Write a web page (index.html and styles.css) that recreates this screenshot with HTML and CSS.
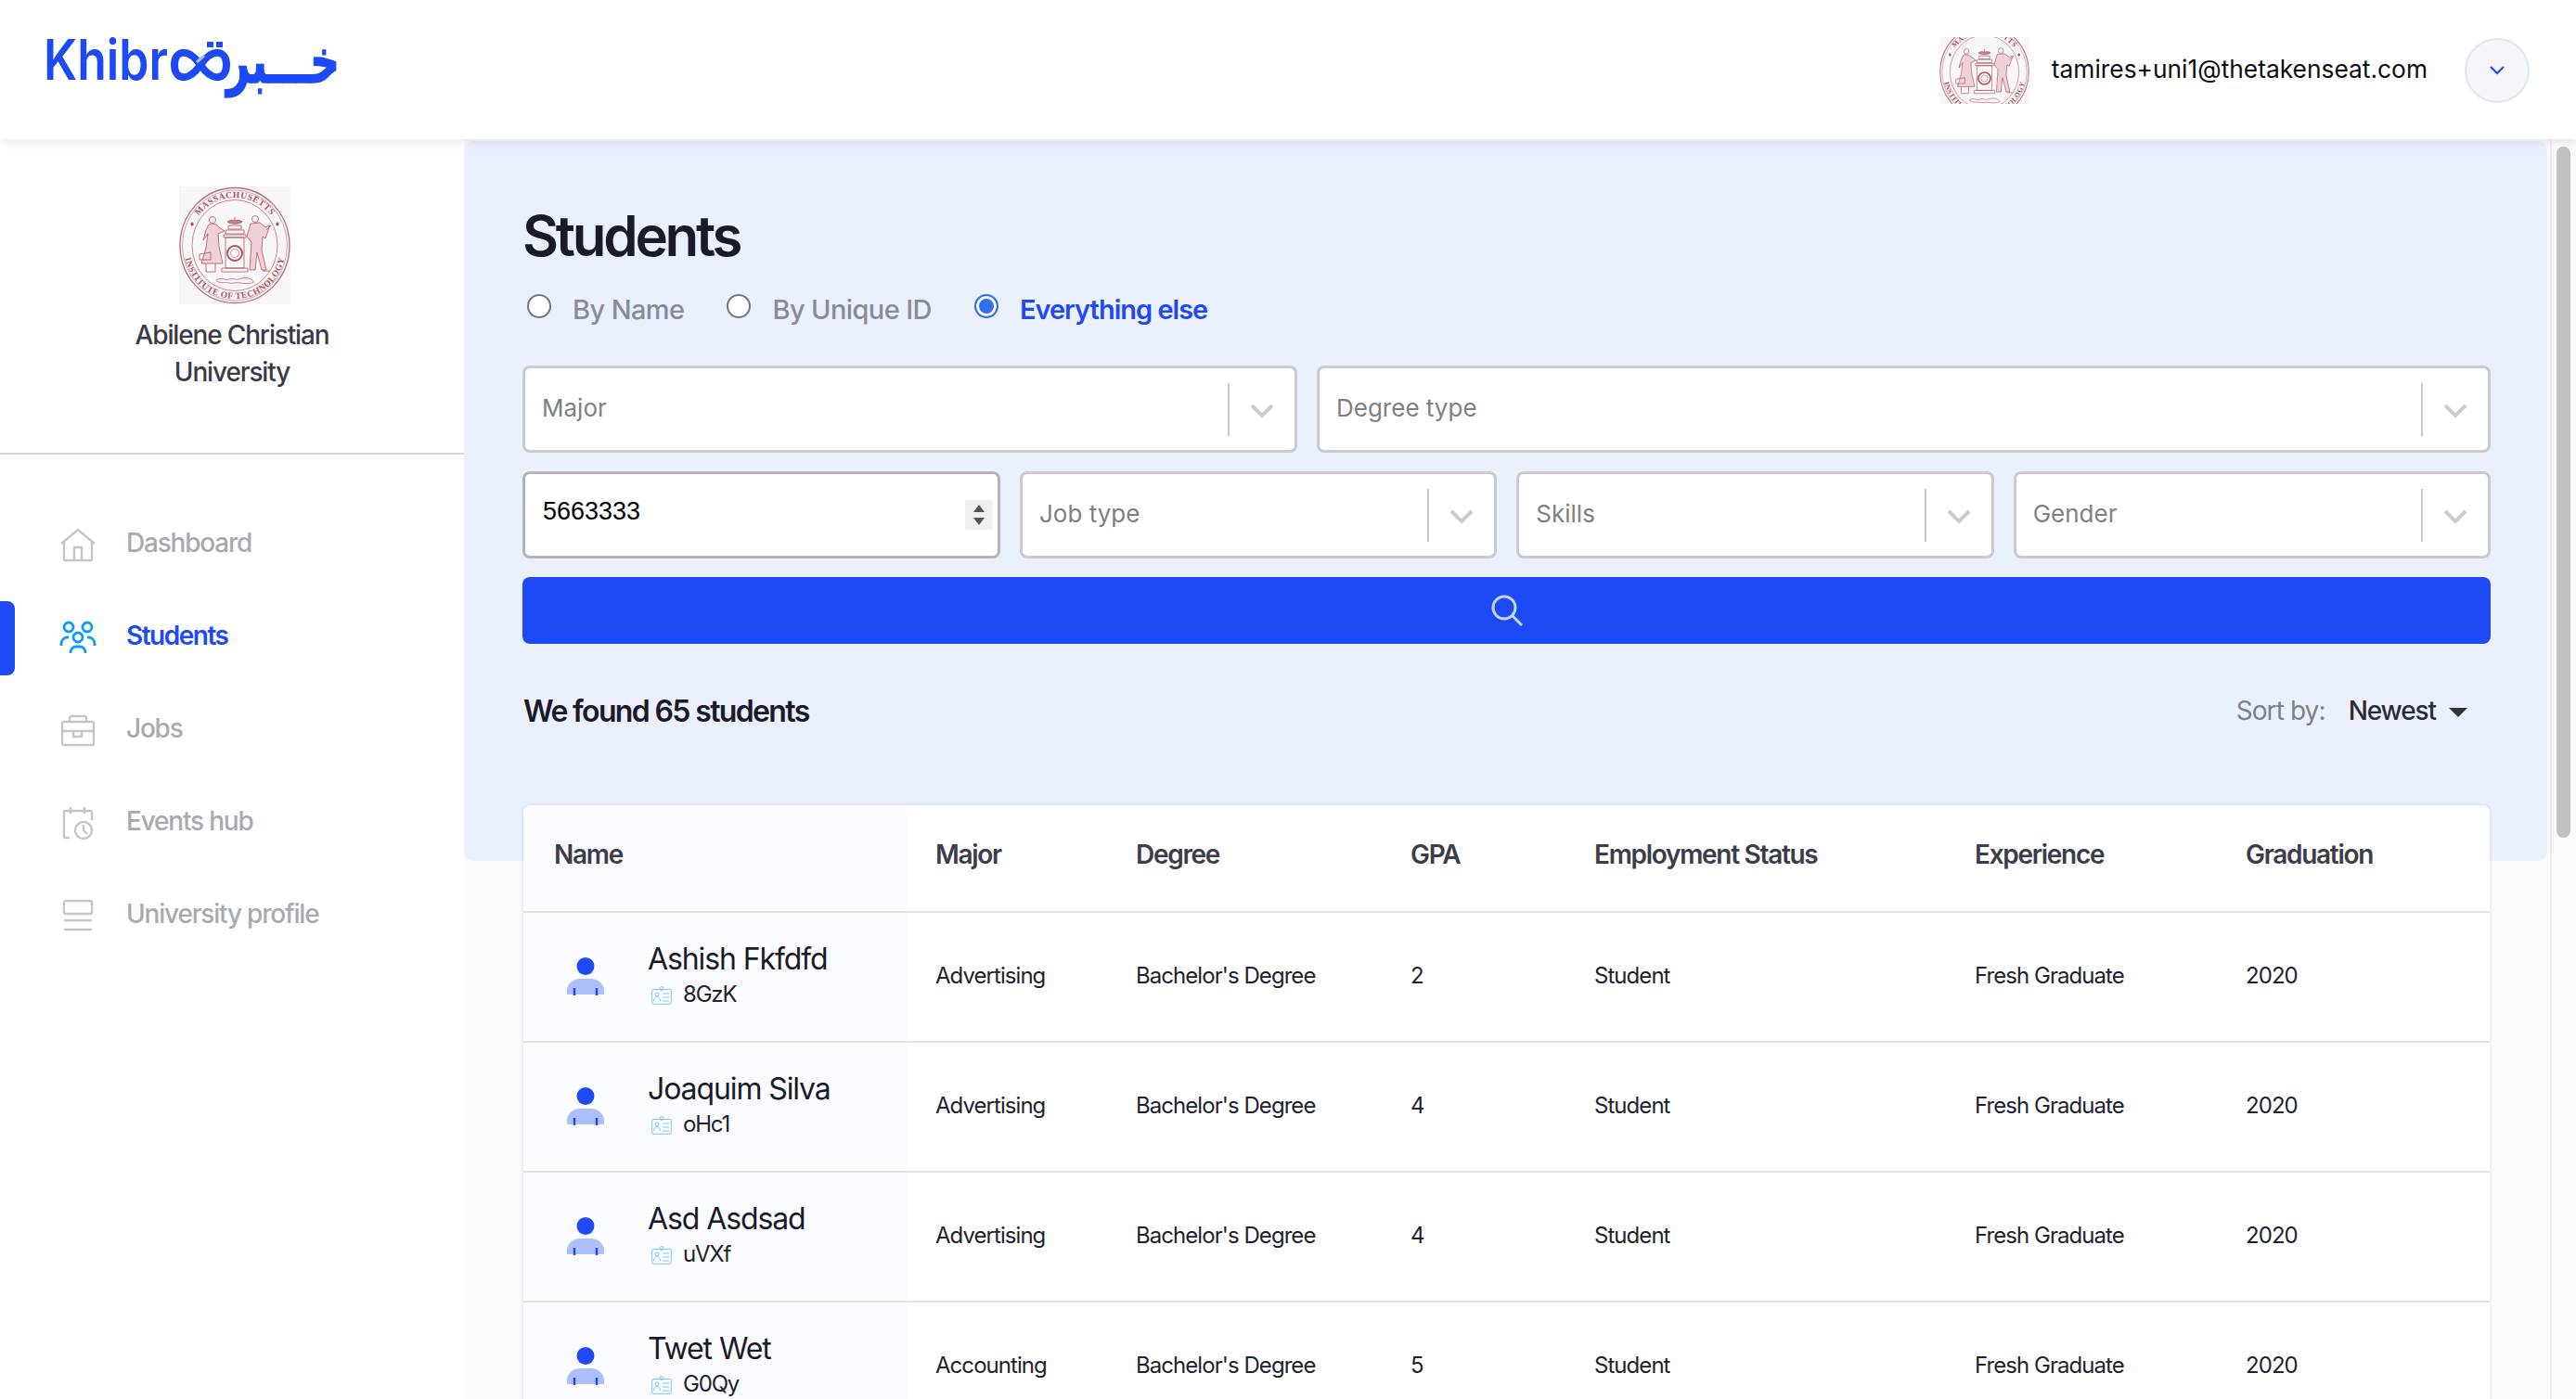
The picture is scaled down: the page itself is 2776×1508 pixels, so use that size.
FILE: index.html
```html
<!DOCTYPE html>
<html lang="en">
<head>
<meta charset="utf-8">
<title>Students</title>
<link rel="stylesheet" href="styles.css">
</head>
<body>
<svg class="defs" width="0" height="0" aria-hidden="true">
  <defs>
    <path id="sealTop" d="M10 63.500 A50 51.500 0 0 1 110 63.500"/>
    <path id="sealBottom" d="M3 50 C3 100 30 121 60 121 C90 121 117 100 117 50"/>
    <g id="seal">
      <rect width="120" height="127" fill="#f7f7f7"/>
      <g fill="none" stroke="#c06a78">
        <ellipse cx="60" cy="63.500" rx="59" ry="62" stroke-width="1.300"/>
        <ellipse cx="60" cy="63.500" rx="56.500" ry="59.500" stroke-width=".6"/>
        <ellipse cx="60" cy="63.500" rx="46" ry="49" stroke-width=".8"/>
      </g>
      <g class="seal-text">
        <text><textPath href="#sealTop" startOffset="50%" text-anchor="middle">MASSACHUSETTS</textPath></text>
        <text><textPath href="#sealBottom" startOffset="50%" text-anchor="middle">INSTITUTE OF TECHNOLOGY</textPath></text>
      </g>
      <g fill="#b5505f">
        <path d="M14 38l2 2.500-2 2.500-2-2.500zM106 38l2 2.500-2 2.500-2-2.500z"/>
      </g>
      <g fill="none" stroke="#b5505f" stroke-width=".8">
        <path d="M52 38c3-2 5-2 8-1 3-1 6-1 8 1-3 3-13 3-16 0z" fill="#c9808c"/>
        <path d="M60 33v4M53 42h14v4H53zM50 47h20v4H50z"/>
        <path d="M48 52h24v3H48zM50 55h20v33H50zM46 88h28v4H46z"/>
        <circle cx="60" cy="72" r="8" stroke-width="2"/>
        <circle cx="60" cy="72" r="4.500" stroke-width=".6"/>
        <circle cx="36" cy="36" r="3.500"/>
        <path d="M32 41c4-2 9 0 11 3l6 4-7 3 1 14 4 18H24l5-17 2-15-5 7 3-11z" fill="#eed1d6"/>
        <path d="M29 83v9h10v-9M22 73l12-2v8H22z"/>
        <circle cx="82" cy="35" r="3.500"/>
        <path d="M77 40l10-1 6 5 5-2-5 14-3-2-1 15 5 21h-5l-5-19-2 19h-6l2-30-5-6z" fill="#eed1d6"/>
        <path d="M94 47l5-5M90 91h8"/>
        <path d="M40 101c6-4 10 1 14-1s7 1 10 0 10-3 15 1-7 4-13 3-8 1-12 0-12 1-14-3z" stroke-width=".7"/>
      </g>
    </g>
  </defs>
</svg>

<header class="topbar">
  <svg class="logo" viewBox="0 0 316 66" role="img" aria-label="Khibra">
    <text class="logo-latin" x="-3" y="44" textLength="134" lengthAdjust="spacingAndGlyphs">Khibr</text>
    <path class="logo-stroke" d="M166 28 C152 8 138 13 138 28 C138 43 152 48 166 28 C180 8 194 13 194 28 C194 43 180 48 166 28 Z"/>
    <path class="logo-link" d="M162 25l8-7"/>
    <path class="logo-dots" d="M173 3h7v6h-7zM183 3h7v6h-7z"/>
    <text class="logo-arabic" x="316" y="47" direction="rtl" textLength="122" lengthAdjust="spacingAndGlyphs">خـــبر</text>
  </svg>
  <div class="account">
    <svg class="account-seal" viewBox="0 17 120 89" preserveAspectRatio="none"><use href="#seal"/></svg>
    <span class="account-mail">tamires+uni1@thetakenseat.com</span>
    <button class="account-toggle" type="button" aria-label="Open menu">
      <svg width="18" height="12" viewBox="0 0 18 12"><path d="M2 2l7 7 7-7" fill="none" stroke="#1e4af5" stroke-width="2.200"/></svg>
    </button>
  </div>
</header>

<div class="shell">
  <aside class="sidebar">
    <div class="org">
      <svg class="org-seal" viewBox="0 0 120 127"><use href="#seal"/></svg>
      <p class="org-name">Abilene Christian University</p>
    </div>
    <nav class="nav">
      <a class="nav-item">
        <svg class="nav-icon" viewBox="0 0 40 40"><path d="M2 18L20 3l18 15M5 16v19a1 1 0 0 0 1 1h28a1 1 0 0 0 1-1V16M16 36V22h8v14"/></svg>
        Dashboard
      </a>
      <a class="nav-item active">
        <svg class="nav-icon" viewBox="0 0 40 40"><circle cx="10" cy="8" r="5"/><circle cx="30" cy="8" r="5"/><circle cx="20" cy="19" r="5"/><path d="M2 28v-2a7 7 0 0 1 6-7h2M38 28v-2a7 7 0 0 0-6-7h-2M12 36v-1a6 6 0 0 1 6-6h4a6 6 0 0 1 6 6v1"/></svg>
        Students
      </a>
      <a class="nav-item">
        <svg class="nav-icon" viewBox="0 0 40 40"><rect x="3" y="10" width="34" height="25" rx="2"/><path d="M11 10V6a2 2 0 0 1 2-2h14a2 2 0 0 1 2 2v4M3 20h34M15 20v6h9v-6"/></svg>
        Jobs
      </a>
      <a class="nav-item">
        <svg class="nav-icon" viewBox="0 0 40 40"><path d="M11 6H6a1 1 0 0 0-1 1v27a1 1 0 0 0 1 1h5M11 6h18M29 6h5a1 1 0 0 1 1 1v9M12 2v7M27 2v7"/><circle cx="26" cy="27" r="9"/><path d="M26 21v6l4 4"/></svg>
        Events hub
      </a>
      <a class="nav-item">
        <svg class="nav-icon" viewBox="0 0 40 40"><rect x="5" y="3" width="30" height="14" rx="2"/><path d="M5 24h30M5 34h30"/></svg>
        University profile
      </a>
    </nav>
  </aside>

  <main class="content">
    <section class="search-panel">
      <h1 class="title">Students</h1>
      <div class="modes">
        <label class="mode"><span class="radio"></span>By Name</label>
        <label class="mode"><span class="radio"></span>By Unique ID</label>
        <label class="mode selected"><span class="radio"></span>Everything else</label>
      </div>
      <div class="filter-row">
        <div class="select wide-major"><span class="select-label">Major</span><span class="select-sep"></span><svg class="chev" viewBox="0 0 26 16"><path d="M2 2l11 11L24 2"/></svg></div>
        <div class="select wide-degree"><span class="select-label">Degree type</span><span class="select-sep"></span><svg class="chev" viewBox="0 0 26 16"><path d="M2 2l11 11L24 2"/></svg></div>
      </div>
      <div class="filter-row">
        <div class="number-box"><span class="number-value">5663333</span>
          <span class="spinner"><svg width="14" height="26" viewBox="0 0 14 26"><path d="M7 2l6 8H1zM7 24l-6-8h12z" fill="#555"/></svg></span>
        </div>
        <div class="select cell"><span class="select-label">Job type</span><span class="select-sep"></span><svg class="chev" viewBox="0 0 26 16"><path d="M2 2l11 11L24 2"/></svg></div>
        <div class="select cell"><span class="select-label">Skills</span><span class="select-sep"></span><svg class="chev" viewBox="0 0 26 16"><path d="M2 2l11 11L24 2"/></svg></div>
        <div class="select cell"><span class="select-label">Gender</span><span class="select-sep"></span><svg class="chev" viewBox="0 0 26 16"><path d="M2 2l11 11L24 2"/></svg></div>
      </div>
      <button class="search-btn" type="button" aria-label="Search">
        <svg width="36" height="36" viewBox="0 0 36 36"><circle cx="15" cy="15" r="12"/><path d="M24 24l10 10"/></svg>
      </button>
      <div class="result-bar">
        <strong class="result-count">We found 65 students</strong>
        <div class="sort"><span class="sort-label">Sort by:</span><span class="sort-value">Newest</span><span class="caret"></span></div>
      </div>
    </section>

    <div class="table-card">
      <table class="students">
        <colgroup>
          <col class="c-name"><col class="c-major"><col class="c-degree"><col class="c-gpa"><col class="c-status"><col class="c-exp"><col class="c-grad">
        </colgroup>
        <thead>
          <tr><th>Name</th><th>Major</th><th>Degree</th><th>GPA</th><th>Employment Status</th><th>Experience</th><th>Graduation</th></tr>
        </thead>
        <tbody>
          <tr>
            <td><div class="person"><svg class="avatar" viewBox="0 0 40 40"><use href="#avatarArt"/></svg><div><div class="person-name">Ashish Fkfdfd</div><div class="person-id"><svg class="id-icon" viewBox="0 0 22 20"><use href="#idArt"/></svg>8GzK</div></div></div></td>
            <td>Advertising</td><td>Bachelor's Degree</td><td>2</td><td>Student</td><td>Fresh Graduate</td><td>2020</td>
          </tr>
          <tr>
            <td><div class="person"><svg class="avatar" viewBox="0 0 40 40"><use href="#avatarArt"/></svg><div><div class="person-name">Joaquim Silva</div><div class="person-id"><svg class="id-icon" viewBox="0 0 22 20"><use href="#idArt"/></svg>oHc1</div></div></div></td>
            <td>Advertising</td><td>Bachelor's Degree</td><td>4</td><td>Student</td><td>Fresh Graduate</td><td>2020</td>
          </tr>
          <tr>
            <td><div class="person"><svg class="avatar" viewBox="0 0 40 40"><use href="#avatarArt"/></svg><div><div class="person-name">Asd Asdsad</div><div class="person-id"><svg class="id-icon" viewBox="0 0 22 20"><use href="#idArt"/></svg>uVXf</div></div></div></td>
            <td>Advertising</td><td>Bachelor's Degree</td><td>4</td><td>Student</td><td>Fresh Graduate</td><td>2020</td>
          </tr>
          <tr>
            <td><div class="person"><svg class="avatar" viewBox="0 0 40 40"><use href="#avatarArt"/></svg><div><div class="person-name">Twet Wet</div><div class="person-id"><svg class="id-icon" viewBox="0 0 22 20"><use href="#idArt"/></svg>G0Qy</div></div></div></td>
            <td>Accounting</td><td>Bachelor's Degree</td><td>5</td><td>Student</td><td>Fresh Graduate</td><td>2020</td>
          </tr>
        </tbody>
      </table>
    </div>
  </main>

  <div class="scrollbar"><span class="scroll-thumb"></span></div>
</div>

<svg class="defs" width="0" height="0" aria-hidden="true">
  <defs>
    <g id="avatarArt">
      <circle cx="20" cy="9.500" r="9.500" fill="#1e4af5"/>
      <path d="M0 40V34a14 14 0 0 1 14-11h12a14 14 0 0 1 14 11v6z" fill="#aec0fb"/>
      <path d="M8 33v8M32 33v8" stroke="#1e4af5" stroke-width="2.400"/>
    </g>
    <g id="idArt" fill="none" stroke="#7cc4ff" stroke-width="1">
      <rect x=".7" y="3.500" width="20.600" height="15.800" rx="1.500"/>
      <circle cx="11" cy="2.500" r="2"/>
      <circle cx="6" cy="9" r="2"/>
      <path d="M2.500 16c0-6 7-6 7 0M12 8h7M12 12h7M12 16h7"/>
    </g>
  </defs>
</svg>
</body>
</html>
```
FILE: styles.css
```css
* { box-sizing: border-box; }

html, body {
  margin: 0;
  height: 100%;
  overflow: hidden;
}

body {
  font-family: Inter, "Noto Sans", sans-serif;
  background: #fff;
  color: #1b1b2a;
  width: 2776px;
  height: 1508px;
}

.defs { position: absolute; }

/* top bar */
.topbar {
  position: relative;
  z-index: 2;
  height: 150px;
  display: flex;
  align-items: flex-start;
  justify-content: space-between;
  padding: 40px 50px 0 50px;
  background: #fff;
  box-shadow: 0 2px 10px rgba(30, 40, 80, .12);
}

.logo { width: 316px; height: 66px; margin-top: 2px; overflow: visible; }
.logo-latin { font: 600 60px Inter, sans-serif; fill: #1e4af5; }
.logo-arabic { font: 700 66px "DejaVu Sans", sans-serif; fill: #1e4af5; stroke: #1e4af5; stroke-width: 1.500px; }
.logo-stroke { fill: none; stroke: #1e4af5; stroke-width: 8; }
.logo-link { stroke: #a9bdfb; stroke-width: 3; }
.logo-dots { fill: #1e4af5; }

.account { display: flex; align-items: center; height: 72px; }
.account-seal { width: 97px; height: 72px; margin-right: 24px; }
.account-mail { font-size: 26.350px; color: #0c0c14; margin: -4px 40px 0 0; }
.account-toggle {
  width: 70px;
  height: 70px;
  padding: 0;
  border: 2px solid #dde5f7;
  border-radius: 50%;
  background: #f5f6f9;
  display: flex;
  align-items: center;
  justify-content: center;
}

/* shell */
.shell { display: flex; height: 1358px; }

.sidebar {
  width: 500px;
  flex: none;
  background: #fff;
}

.org {
  height: 340px;
  padding-top: 51px;
  border-bottom: 2px solid #d2d2d2;
  display: flex;
  flex-direction: column;
  align-items: center;
}
.org-seal { width: 120px; height: 127px; margin-left: 6px; display: block; }
.org-name {
  margin: 13px 0 0;
  width: 260px;
  text-align: center;
  font-size: 28px;
  font-weight: 500;
  line-height: 40px;
  letter-spacing: -1.150px;
  color: #3a3a4a;
}

.nav { padding-top: 45px; }
.nav-item {
  position: relative;
  display: flex;
  align-items: center;
  gap: 32px;
  height: 100px;
  padding-left: 64px;
  font-size: 28px;
  font-weight: 500;
  letter-spacing: -1.200px;
  color: #a9a9b2;
}
.nav-icon {
  width: 40px;
  height: 40px;
  margin-top: 6px;
  fill: none;
  stroke: #c5c5ca;
  stroke-width: 2.400;
  flex: none;
}
.nav-item.active { color: #1e4af5; font-weight: 600; letter-spacing: -1.500px; }
.nav-item.active .nav-icon { stroke: #0a9bff; stroke-width: 2.800; }
.nav-item.active::before {
  content: "";
  position: absolute;
  left: 0;
  top: 13px;
  width: 16px;
  height: 80px;
  border-radius: 0 8px 8px 0;
  background: #1e4af5;
}

/* content */
.content {
  flex: 1;
  min-width: 0;
  background: #fafafa;
  padding: 2px 3px 0 0;
}

.search-panel {
  height: 776px;
  background: #eaf0fe;
  border-radius: 10px;
  padding: 68px 61px 0 63px;
}

.title {
  margin: 0;
  font-size: 60px;
  font-weight: 600;
  line-height: 68px;
  letter-spacing: -3.250px;
  color: #1a1a2b;
}

.modes { display: flex; margin-top: 25px; height: 40px; align-items: center; }
.mode {
  display: flex;
  align-items: center;
  gap: 23px;
  margin-right: 41px;
  font-size: 29px;
  font-weight: 500;
  letter-spacing: -.6px;
  color: #8a8b96;
}
.radio {
  width: 26px;
  height: 26px;
  margin: -6px 0 0 5px;
  border: 2px solid #767676;
  border-radius: 50%;
  background: #fff;
}
.mode.selected { color: #1e4af5; font-weight: 600; letter-spacing: -1px; }
.mode.selected .radio {
  border-color: #2f6ff0;
  background: #2f6ff0;
  box-shadow: inset 0 0 0 3px #fff;
}

.filter-row { display: flex; gap: 21px; margin-top: 20px; }
.modes + .filter-row { margin-top: 41px; }

.select, .number-box {
  height: 94px;
  background: #fff;
  border: 3px solid #cbcbcb;
  border-radius: 8px;
  display: flex;
  align-items: center;
  padding-left: 18px;
}
.wide-major { width: 835px; flex: none; }
.wide-degree { flex: 1; }
.cell { flex: 1; }
.number-box { width: 515px; flex: none; border-color: #b5b5b5; padding-right: 5px; padding-left: 19px; }

.select-label { flex: 1; font-size: 26px; color: #808080; margin-top: -4px; }
.select-sep { width: 2px; height: 57px; background: #c8c8c8; }
.chev {
  width: 26px;
  height: 16px;
  margin: 4px 22px 0 22px;
  fill: none;
  stroke: #cccccc;
  stroke-width: 4;
}

.number-value { flex: 1; font: 27px "Liberation Sans", sans-serif; color: #000; margin-top: -8px; }
.spinner {
  width: 30px;
  height: 32px;
  background: #f0f0f0;
  display: flex;
  align-items: center;
  justify-content: center;
  border-radius: 2px;
}

.search-btn {
  width: 100%;
  height: 72px;
  margin-top: 20px;
  border: 0;
  border-radius: 8px;
  background: #1e4af5;
  display: flex;
  align-items: center;
  justify-content: center;
  padding: 0;
}
.search-btn svg { fill: none; stroke: #c6d3fd; stroke-width: 3; }

.result-bar {
  display: flex;
  justify-content: space-between;
  align-items: center;
  margin-top: 50px;
  padding: 0 25px 0 1px;
  height: 44px;
}
.result-count { font-size: 32px; font-weight: 600; letter-spacing: -1.650px; color: #1a1a2b; }
.sort { display: flex; align-items: center; }
.sort-label { font-size: 28px; letter-spacing: -.9px; color: #808088; margin-right: 25px; }
.sort-value { font-size: 28px; font-weight: 500; letter-spacing: -1.100px; color: #2c2c34; margin-right: 14px; }
.caret {
  width: 0;
  height: 0;
  margin-top: 4px;
  border-left: 10px solid transparent;
  border-right: 10px solid transparent;
  border-top: 10px solid #333;
}

/* table */
.table-card {
  margin: -60px 62px 0 64px;
  background: #fff;
  border-radius: 8px 8px 0 0;
  box-shadow: 0 0 4px rgba(40, 50, 90, .14);
  overflow: hidden;
}
.students { width: 100%; border-collapse: collapse; table-layout: fixed; }
.c-name { width: 413px; }
.c-major { width: 214px; }
.c-degree { width: 296px; }
.c-gpa { width: 198px; }
.c-status { width: 410px; }
.c-exp { width: 292px; }

.students th {
  height: 115px;
  padding: 0 0 8px 33px;
  text-align: left;
  font-size: 28px;
  font-weight: 600;
  letter-spacing: -1.300px;
  color: #3c3c4a;
  border-bottom: 2px solid #e4e4e4;
}
.students td {
  height: 140px;
  padding: 0 0 3px 33px;
  font-size: 24px;
  letter-spacing: -.950px;
  color: #22222e;
  border-bottom: 2px solid #e4e4e4;
}
.students th:first-child, .students td:first-child { background: #fbfcff; }
.students td:first-child { padding-bottom: 0; }
.students th:nth-child(2), .students td:nth-child(2) { padding-left: 31px; }

.person { display: flex; align-items: center; margin-left: 14px; gap: 47px; }
.avatar { width: 40px; height: 40px; margin-top: -2px; flex: none; overflow: visible; }
.person-name { font-size: 32px; line-height: 40px; letter-spacing: -1.100px; color: #1a1a28; margin-top: -4px; }
.person-id { display: flex; align-items: center; gap: 12px; font-size: 24px; line-height: 34px; letter-spacing: -1.200px; margin-top: 1px; padding-left: 4px; }
.id-icon { width: 22px; height: 20px; flex: none; margin-top: 3px; }

/* scrollbar */
.scrollbar {
  width: 28px;
  flex: none;
  background: #fafafa;
  border-left: 2px solid #ececec;
  padding: 8px 6px 0 5px;
}
.scroll-thumb {
  display: block;
  height: 745px;
  background: #c1c1c1;
  border-radius: 8px;
}

/* seal */
.seal-text { font: 700 9.500px "Liberation Serif", serif; fill: #b5505f; letter-spacing: .5px; }
```
